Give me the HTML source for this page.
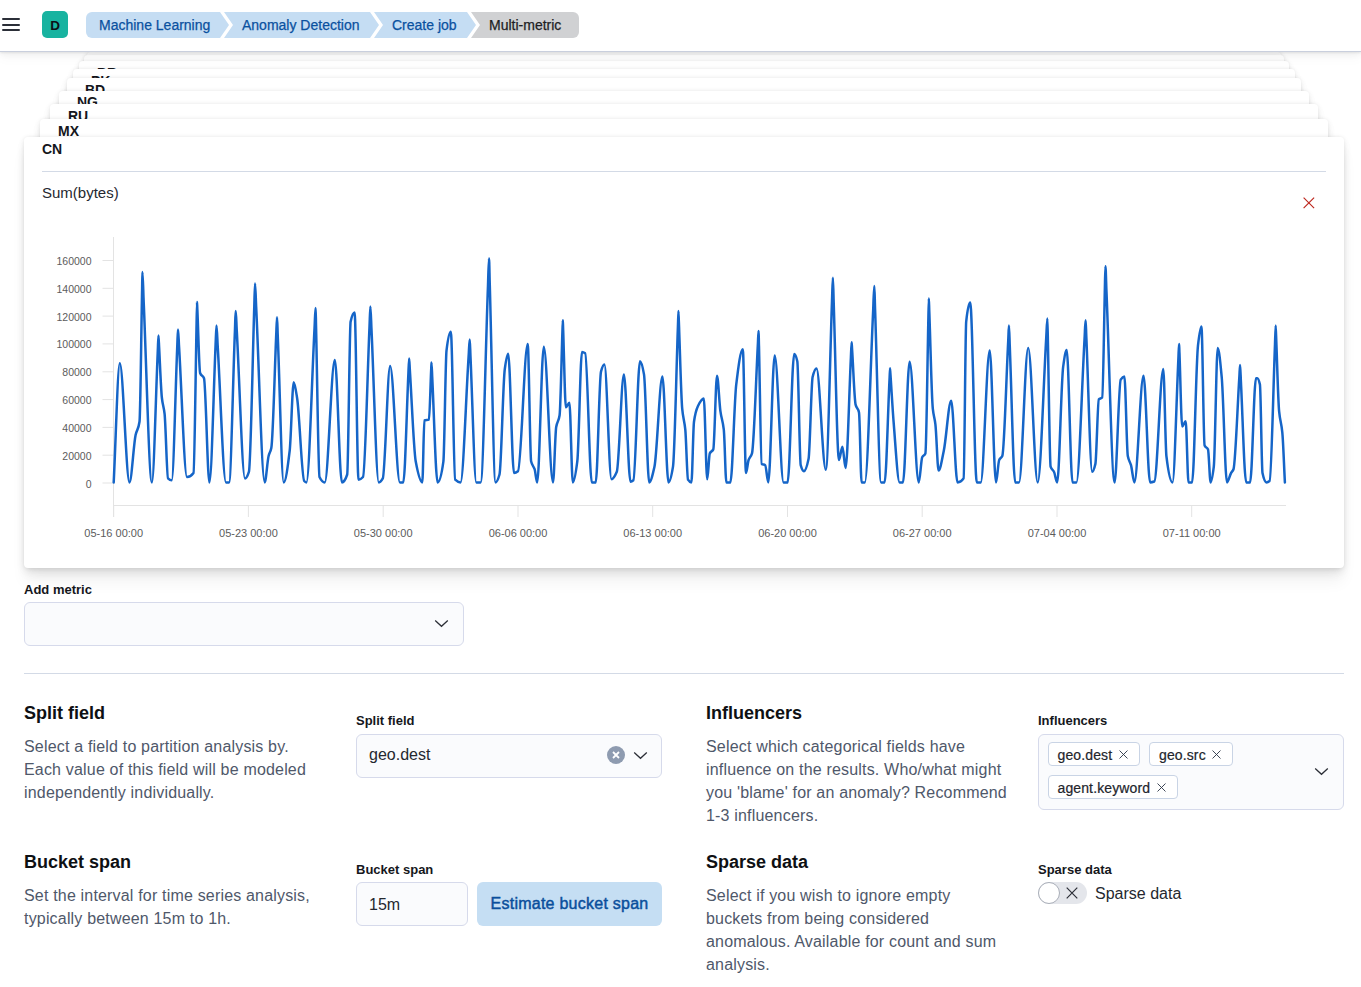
<!DOCTYPE html>
<html><head><meta charset="utf-8">
<style>
*{box-sizing:border-box;margin:0;padding:0}
html,body{width:1361px;height:987px;overflow:hidden;background:#fff;font-family:"Liberation Sans",sans-serif;color:#1d2a3e}
.abs{position:absolute}
#hdr{position:absolute;left:0;top:0;width:1361px;height:52px;background:#fff;border-bottom:1px solid #c9cfdd;box-shadow:0 1px 2px rgba(0,0,0,0.08),0 3px 6px rgba(0,0,0,0.04),0 6px 12px rgba(0,0,0,0.03);z-index:50}
.hb{position:absolute;left:2px;width:18px;height:2px;background:#2b2f38;border-radius:1px}
#av{position:absolute;left:42px;top:11px;width:26px;height:27px;border-radius:5px;background:#18b3a0;color:#0b0f16;font-size:13.5px;font-weight:700;text-align:center;line-height:29px}
.crumb{position:absolute;top:12px;height:26px;background:#c5ddf3;color:#0a519f;font-size:14px;line-height:26px;white-space:nowrap;-webkit-text-stroke:0.25px currentColor}
.card{position:absolute;background:#fff;border-radius:4px;box-shadow:0 0.9px 4px -1px rgba(0,0,0,.10),0 2.6px 8px -1px rgba(0,0,0,.08),0 5.7px 12px -1px rgba(0,0,0,.06),0 15px 15px -1px rgba(0,0,0,.05)}
.clabel{position:absolute;font-size:14px;font-weight:700;color:#15171c;white-space:nowrap}
.ttl{position:absolute;font-size:18px;font-weight:700;color:#0e1013;white-space:nowrap;margin-top:1px}
.desc{position:absolute;font-size:16px;line-height:23px;color:#4f586a;letter-spacing:0.18px}
.flabel{position:absolute;font-size:13px;font-weight:700;color:#15171c;white-space:nowrap;margin-top:1px}
.ctl{position:absolute;background:#fafbfd;border:1px solid #d6daeb;border-radius:6px}
.pill{position:absolute;height:24px;background:#fff;border:1px solid #c9d4e5;border-radius:4px;font-size:14px;line-height:22px;color:#22252c;padding-left:9px;white-space:nowrap;letter-spacing:0.12px;-webkit-text-stroke:0.2px currentColor}
</style></head><body>
<div id="hdr">
  <div class="hb" style="top:18.1px;height:2.2px"></div>
  <div class="hb" style="top:23.6px;height:2.2px"></div>
  <div class="hb" style="top:28.8px;height:2.2px"></div>
  <div id="av">D</div>
  <div class="crumb" style="left:86px;width:143px;padding-left:13px;clip-path:polygon(0 0, 134px 0, 143px 50%, 134px 100%, 0 100%);border-radius:6px 0 0 6px;">Machine Learning</div>
<div class="crumb" style="left:224px;width:155px;padding-left:18px;clip-path:polygon(0 0, 146px 0, 155px 50%, 146px 100%, 0 100%, 9px 50%);">Anomaly Detection</div>
<div class="crumb" style="left:374px;width:102px;padding-left:18px;clip-path:polygon(0 0, 93px 0, 102px 50%, 93px 100%, 0 100%, 9px 50%);">Create job</div>
<div class="crumb" style="left:471px;width:108px;padding-left:18px;clip-path:polygon(0 0, 100% 0, 100% 100%, 0 100%, 9px 50%);border-radius:0 6px 6px 0;background:#d0d1d3;color:#1d1e24;">Multi-metric</div>

</div>
<div class="card" style="left:40px;top:119px;width:1288px;height:300px;z-index:19"><div class="clabel" style="left:18px;top:4px">MX</div></div>
<div class="card" style="left:50px;top:104.3px;width:1268px;height:300px;z-index:18"><div class="clabel" style="left:18px;top:3.5px">RU</div></div>
<div class="card" style="left:59px;top:90.6px;width:1250px;height:300px;z-index:17"><div class="clabel" style="left:18px;top:3.2px">NG</div></div>
<div class="card" style="left:67px;top:78.4px;width:1234px;height:300px;z-index:16"><div class="clabel" style="left:18px;top:4px">BD</div></div>
<div class="card" style="left:73px;top:69.3px;width:1222px;height:300px;z-index:15"><div class="clabel" style="left:18px;top:4px">PK</div></div>
<div class="card" style="left:79px;top:60.8px;width:1210px;height:300px;z-index:14"><div class="clabel" style="left:18px;top:4px">BR</div></div>
<div class="card" style="left:83.6px;top:55.3px;width:1200.9px;height:300px;z-index:13"><div class="clabel" style="left:18px;top:4px">IN</div></div>
<div class="card" style="left:87px;top:52px;width:1194px;height:300px;z-index:12"><div class="clabel" style="left:18px;top:4px">US</div></div>

<div class="card" style="left:24px;top:137px;width:1320px;height:431px;z-index:20">
  <div class="clabel" style="left:18px;top:4px">CN</div>
  <div class="abs" style="left:18px;top:34px;width:1284px;height:1px;background:#d3dae6"></div>
  <div class="abs" style="left:18px;top:47px;font-size:15px;color:#25282f">Sum(bytes)</div>
  <svg class="abs" style="left:1279px;top:60px" width="12" height="12" viewBox="0 0 12 12"><path d="M0.6,0.6 L11.1,11.1 M11.1,0.6 L0.6,11.1" stroke="#bd271e" stroke-width="1.15"/></svg>
</div>
<svg class="abs" style="left:0;top:0;z-index:30" width="1361" height="987" viewBox="0 0 1361 987">
  <g stroke="#e3e3e3" stroke-width="1" fill="none">
    <path d="M113.5,237 V517"/>
    <path d="M113.5,505.5 H1286"/>
    <path d="M102.5,483.0 H113.5"/><path d="M102.5,455.2 H113.5"/><path d="M102.5,427.4 H113.5"/><path d="M102.5,399.6 H113.5"/><path d="M102.5,371.8 H113.5"/><path d="M102.5,343.9 H113.5"/><path d="M102.5,316.1 H113.5"/><path d="M102.5,288.3 H113.5"/><path d="M102.5,260.5 H113.5"/><path d="M113.7,505.5 V517"/><path d="M248.4,505.5 V517"/><path d="M383.2,505.5 V517"/><path d="M518.0,505.5 V517"/><path d="M652.7,505.5 V517"/><path d="M787.5,505.5 V517"/><path d="M922.2,505.5 V517"/><path d="M1057.0,505.5 V517"/><path d="M1191.7,505.5 V517"/>
  </g>
  <g font-family="Liberation Sans" font-size="10.5" fill="#5c5c5c" text-anchor="end"><text x="91.5" y="487.5">0</text><text x="91.5" y="459.7">20000</text><text x="91.5" y="431.9">40000</text><text x="91.5" y="404.1">60000</text><text x="91.5" y="376.3">80000</text><text x="91.5" y="348.4">100000</text><text x="91.5" y="320.6">120000</text><text x="91.5" y="292.8">140000</text><text x="91.5" y="265.0">160000</text></g>
  <g font-family="Liberation Sans" font-size="11" fill="#5c5c5c" text-anchor="middle"><text x="113.7" y="537">05-16 00:00</text><text x="248.4" y="537">05-23 00:00</text><text x="383.2" y="537">05-30 00:00</text><text x="518.0" y="537">06-06 00:00</text><text x="652.7" y="537">06-13 00:00</text><text x="787.5" y="537">06-20 00:00</text><text x="922.2" y="537">06-27 00:00</text><text x="1057.0" y="537">07-04 00:00</text><text x="1191.7" y="537">07-11 00:00</text></g>
  <path d="M113.7,482.4C115.7,442.7 117.8,363.3 119.8,363.3C123.0,363.3 126.3,482.4 129.5,482.4C131.5,482.4 133.6,444.3 135.6,435.0C136.9,429.0 138.2,430.6 139.5,421.8C140.4,416.0 141.2,333.9 142.1,290.0C142.2,284.0 142.3,272.0 142.4,272.0C142.8,272.0 143.2,288.8 143.5,297.2C146.3,359.0 149.1,482.4 151.9,482.4C153.8,482.4 155.8,396.2 157.7,353.0C158.0,347.2 158.2,335.4 158.5,335.4C158.6,335.4 158.8,340.4 158.9,342.9C159.9,361.3 160.9,389.2 161.9,398.0C162.8,406.0 163.7,406.0 164.6,413.9C165.7,423.9 166.9,477.3 168.0,478.4C169.2,479.6 170.5,480.3 171.7,480.3C173.5,480.3 175.4,391.9 177.2,347.7C177.5,341.7 177.7,329.6 178.0,329.6C178.4,329.6 178.7,341.4 179.1,347.3C181.7,390.5 184.4,477.0 187.0,477.0C189.2,477.0 191.3,476.0 193.5,473.0C194.5,471.6 195.6,372.7 196.6,322.5C196.7,315.7 196.9,302.0 197.0,302.0C197.1,302.0 197.2,307.7 197.4,310.5C198.3,331.3 199.2,370.5 200.1,373.0C201.4,376.5 202.7,375.1 204.0,378.3C205.8,382.7 207.6,482.4 209.4,482.4C211.5,482.4 213.6,390.4 215.6,344.4C215.9,338.1 216.2,325.6 216.5,325.6C216.9,325.6 217.3,338.1 217.6,344.4C220.4,390.4 223.2,482.4 226.0,482.4C227.0,482.4 228.0,482.4 229.0,482.4C231.0,482.4 232.9,381.8 234.9,331.6C235.2,324.7 235.4,311.0 235.7,311.0C236.1,311.0 236.4,324.4 236.8,331.1C239.5,380.2 242.3,478.4 245.0,478.4C246.3,478.4 247.6,475.8 248.9,471.8C250.7,466.3 252.5,361.3 254.3,306.1C254.5,298.6 254.8,283.5 255.0,283.5C255.4,283.5 255.8,299.4 256.2,307.4C259.0,365.7 261.9,482.4 264.7,482.4C266.0,482.4 267.3,461.2 268.6,456.0C269.5,452.4 270.4,452.4 271.3,448.0C273.0,439.9 274.6,371.3 276.3,332.9C276.5,327.7 276.8,317.2 277.0,317.2C277.3,317.2 277.5,330.4 277.8,337.0C279.8,385.5 281.7,482.4 283.7,482.4C285.7,482.4 287.7,467.4 289.7,450.7C291.0,439.5 292.4,382.3 293.7,382.3C294.8,382.3 296.0,390.9 297.1,398.0C299.5,412.9 301.8,478.5 304.2,481.0C304.9,481.8 305.7,482.4 306.4,482.4C309.1,482.4 311.8,380.1 314.5,328.9C314.9,322.0 315.2,308.0 315.6,308.0C315.8,308.0 315.9,321.5 316.1,328.3C317.2,377.9 318.4,474.6 319.5,477.0C321.3,480.8 323.0,482.4 324.8,482.4C328.1,482.4 331.5,359.9 334.8,359.9C337.2,359.9 339.5,482.4 341.9,482.4C343.7,482.4 345.4,480.0 347.2,474.5C348.3,471.0 349.5,326.8 350.6,321.7C351.9,315.7 353.3,312.4 354.6,312.4C355.9,312.4 357.2,479.7 358.5,479.7C360.0,479.7 361.5,478.7 363.0,477.0C365.2,474.6 367.3,376.9 369.5,326.9C369.8,320.0 370.1,306.4 370.4,306.4C370.7,306.4 371.1,320.5 371.4,327.5C373.9,379.1 376.3,482.4 378.8,482.4C380.1,482.4 381.5,480.7 382.8,478.4C385.2,474.2 387.7,366.0 390.1,366.0C393.4,366.0 396.6,482.4 399.9,482.4C401.0,482.4 402.2,482.4 403.3,482.4C405.0,482.4 406.7,409.7 408.4,373.4C408.6,368.4 408.9,358.5 409.1,358.5C409.4,358.5 409.6,366.7 409.9,370.8C411.8,401.0 413.8,450.9 415.7,461.3C417.9,473.1 420.1,482.4 422.3,482.4C423.0,482.4 423.7,420.8 424.4,420.5C425.9,419.9 427.4,420.3 428.9,419.7C429.7,419.4 430.4,386.1 431.2,369.4C431.3,367.1 431.4,362.5 431.5,362.5C431.7,362.5 432.0,372.1 432.2,376.9C434.0,412.1 435.8,482.4 437.6,482.4C439.5,482.4 441.5,475.2 443.4,461.3C444.4,453.9 445.5,359.0 446.5,350.6C447.9,338.9 449.4,331.7 450.8,331.7C452.3,331.7 453.7,478.2 455.2,479.7C457.0,481.5 458.7,482.4 460.5,482.4C463.2,482.4 465.9,398.6 468.6,356.7C469.0,351.0 469.3,339.6 469.7,339.6C470.0,339.6 470.2,351.0 470.5,356.7C472.4,398.6 474.4,482.4 476.3,482.4C477.7,482.4 479.2,482.4 480.6,482.4C483.1,482.4 485.5,351.0 488.0,285.3C488.3,276.3 488.7,258.4 489.0,258.4C489.3,258.4 489.5,276.3 489.8,285.3C491.7,351.0 493.7,482.4 495.6,482.4C496.9,482.4 498.2,479.1 499.5,474.5C501.3,468.3 503.0,381.3 504.8,369.0C505.9,361.1 507.1,353.8 508.2,353.8C510.1,353.8 512.1,473.0 514.0,473.0C515.3,473.0 516.7,472.3 518.0,471.3C521.2,468.9 524.5,344.0 527.7,344.0C528.8,344.0 530.0,456.5 531.1,461.3C532.3,466.3 533.4,465.5 534.6,469.2C535.5,472.0 536.3,482.4 537.2,482.4C539.4,482.4 541.6,346.7 543.8,346.7C546.9,346.7 549.9,482.4 553.0,482.4C554.1,482.4 555.1,433.2 556.2,427.0C557.3,420.4 558.5,422.4 559.6,415.2C560.5,409.2 561.5,359.5 562.4,331.7C562.5,327.9 562.7,320.3 562.8,320.3C562.9,320.3 563.0,327.3 563.2,330.7C564.1,356.3 565.0,407.3 565.9,407.3C567.1,407.3 568.2,402.8 569.4,402.8C570.5,402.8 571.7,482.4 572.8,482.4C574.3,482.4 575.8,473.0 577.3,461.3C578.9,449.1 580.4,352.0 582.0,352.0C583.1,352.0 584.1,352.5 585.2,353.3C587.4,354.9 589.6,482.4 591.8,482.4C593.1,482.4 594.4,482.4 595.7,482.4C597.5,482.4 599.2,378.0 601.0,371.7C602.1,367.6 603.3,364.6 604.4,364.6C606.8,364.6 609.1,479.2 611.5,479.2C613.3,479.2 615.0,476.1 616.8,471.8C619.2,466.0 621.5,374.4 623.9,374.4C626.1,374.4 628.3,481.8 630.5,481.8C631.5,481.8 632.4,481.2 633.4,480.3C635.6,478.3 637.8,361.2 640.0,361.2C641.3,361.2 642.7,367.0 644.0,374.4C645.7,384.0 647.5,482.4 649.2,482.4C651.0,482.4 652.7,474.6 654.5,466.6C657.1,454.6 659.8,376.5 662.4,376.5C664.4,376.5 666.5,482.4 668.5,482.4C670.0,482.4 671.5,475.9 673.0,466.6C674.6,456.6 676.2,375.4 677.8,329.8C678.1,323.5 678.3,311.1 678.5,311.1C678.6,311.1 678.8,318.9 678.9,322.8C680.0,351.4 681.1,396.9 682.2,408.6C683.2,419.7 684.3,419.3 685.3,429.7C686.2,438.8 687.1,478.3 688.0,479.7C689.1,481.5 690.3,482.4 691.4,482.4C692.3,482.4 693.1,428.0 694.0,421.8C695.3,412.3 696.7,408.7 698.0,406.0C699.9,402.2 701.9,398.6 703.8,398.6C704.9,398.6 706.1,479.2 707.2,479.2C708.1,479.2 708.9,455.2 709.8,453.4C711.0,450.9 712.1,451.9 713.3,449.4C714.5,446.8 715.8,375.7 717.0,375.7C718.1,375.7 719.3,403.1 720.4,411.2C721.5,419.3 722.7,419.7 723.8,429.7C724.7,437.3 725.5,482.4 726.4,482.4C727.7,482.4 729.1,482.4 730.4,482.4C732.3,482.4 734.3,400.9 736.2,384.9C738.4,366.7 740.6,349.3 742.8,349.3C743.9,349.3 744.9,473.1 746.0,473.1C746.9,473.1 747.7,462.5 748.6,460.0C749.7,456.8 750.9,457.1 752.0,453.4C753.9,447.0 755.9,381.5 757.8,345.6C758.1,340.7 758.3,330.9 758.6,330.9C758.7,330.9 758.8,341.5 759.0,346.9C759.9,385.9 760.8,463.2 761.7,463.9C762.9,464.8 764.0,464.4 765.2,465.2C766.2,465.9 767.3,482.4 768.3,482.4C770.4,482.4 772.6,355.4 774.7,355.4C777.7,355.4 780.6,482.4 783.6,482.4C784.9,482.4 786.3,482.4 787.6,482.4C789.8,482.4 792.0,354.1 794.2,354.1C795.2,354.1 796.3,356.9 797.3,361.2C798.4,366.0 799.6,461.2 800.7,465.2C801.8,469.0 802.8,471.3 803.9,471.3C805.5,471.3 807.0,466.3 808.6,458.7C809.9,452.2 811.3,382.2 812.6,377.0C813.9,372.0 815.2,368.6 816.5,368.6C819.6,368.6 822.7,469.7 825.8,469.7C827.9,469.7 830.0,357.1 832.0,300.7C832.3,293.1 832.6,277.7 832.9,277.7C833.1,277.7 833.4,292.3 833.6,299.6C835.4,353.1 837.2,460.0 839.0,460.0C840.1,460.0 841.3,446.8 842.4,446.8C843.5,446.8 844.5,467.9 845.6,467.9C847.4,467.9 849.1,394.2 850.9,357.3C851.1,352.3 851.4,342.2 851.6,342.2C851.8,342.2 851.9,347.2 852.1,349.7C853.3,368.0 854.4,399.9 855.6,404.6C856.7,409.2 857.9,407.5 859.0,412.5C859.9,416.4 860.7,482.4 861.6,482.4C862.7,482.4 863.7,482.4 864.8,482.4C867.6,482.4 870.4,367.2 873.2,309.7C873.5,301.8 873.9,286.1 874.3,286.1C874.6,286.1 874.8,301.8 875.1,309.7C877.1,367.2 879.1,482.4 881.1,482.4C882.3,482.4 883.4,482.4 884.6,482.4C886.2,482.4 887.8,415.5 889.4,382.0C889.7,377.4 889.9,368.3 890.1,368.3C890.2,368.3 890.4,372.8 890.5,375.0C891.6,391.5 892.7,411.1 893.8,424.4C895.7,448.2 897.7,482.4 899.6,482.4C900.7,482.4 901.9,482.4 903.0,482.4C905.2,482.4 907.4,361.7 909.6,361.7C912.7,361.7 915.7,482.4 918.8,482.4C919.9,482.4 921.1,459.7 922.2,457.3C923.3,455.1 924.3,456.0 925.4,453.4C926.4,451.0 927.4,362.5 928.4,317.1C928.5,310.9 928.7,298.5 928.8,298.5C929.0,298.5 929.1,307.3 929.3,311.7C930.5,344.0 931.6,397.3 932.8,408.6C933.7,417.0 934.5,417.1 935.4,424.4C936.5,433.4 937.5,470.5 938.6,470.5C940.3,470.5 942.1,459.0 943.8,450.7C946.3,438.9 948.7,400.7 951.2,400.7C953.3,400.7 955.4,482.4 957.5,482.4C959.5,482.4 961.6,481.4 963.6,478.4C964.5,477.1 965.3,329.9 966.2,321.7C967.5,309.0 968.9,302.4 970.2,302.4C972.4,302.4 974.6,482.4 976.8,482.4C978.1,482.4 979.4,482.4 980.7,482.4C983.7,482.4 986.7,350.6 989.7,350.6C991.8,350.6 993.9,482.4 996.0,482.4C997.1,482.4 998.1,462.3 999.2,460.0C1000.2,457.8 1001.3,458.3 1002.3,456.0C1004.3,451.6 1006.2,379.5 1008.2,341.2C1008.5,336.0 1008.7,325.6 1009.0,325.6C1009.2,325.6 1009.5,338.1 1009.7,344.4C1011.6,390.4 1013.4,482.4 1015.2,482.4C1016.5,482.4 1017.7,482.4 1019.0,482.4C1022.1,482.4 1025.1,348.0 1028.2,348.0C1031.4,348.0 1034.5,482.4 1037.7,482.4C1040.5,482.4 1043.4,386.2 1046.2,338.2C1046.6,331.6 1047.0,318.5 1047.4,318.5C1047.5,318.5 1047.7,330.3 1047.8,336.3C1048.7,379.7 1049.7,463.7 1050.6,466.6C1051.7,470.1 1052.9,469.4 1054.0,471.8C1055.1,474.0 1056.1,482.4 1057.2,482.4C1059.2,482.4 1061.2,380.6 1063.2,366.4C1064.4,358.1 1065.5,350.1 1066.7,350.1C1068.6,350.1 1070.6,482.4 1072.5,482.4C1073.8,482.4 1075.1,482.4 1076.4,482.4C1079.1,482.4 1081.8,387.3 1084.5,339.8C1084.9,333.3 1085.2,320.3 1085.6,320.3C1085.9,320.3 1086.1,332.4 1086.4,338.5C1088.3,382.9 1090.3,471.8 1092.2,471.8C1093.3,471.8 1094.3,468.5 1095.4,463.9C1096.5,459.0 1097.7,400.6 1098.8,399.4C1099.9,398.2 1101.1,398.8 1102.2,397.5C1103.1,396.4 1104.1,320.5 1105.0,282.0C1105.1,276.8 1105.3,266.3 1105.4,266.3C1105.8,266.3 1106.1,283.6 1106.5,292.2C1109.2,355.6 1111.9,482.4 1114.6,482.4C1116.6,482.4 1118.7,382.6 1120.7,379.6C1121.9,377.8 1123.2,376.5 1124.4,376.5C1125.5,376.5 1126.7,450.2 1127.8,456.0C1128.9,461.4 1129.9,461.3 1131.0,465.2C1132.1,469.3 1133.3,482.4 1134.4,482.4C1137.4,482.4 1140.5,375.7 1143.5,375.7C1145.7,375.7 1147.9,482.4 1150.1,482.4C1151.5,482.4 1152.9,482.0 1154.3,481.5C1157.3,480.4 1160.3,369.1 1163.3,369.1C1164.3,369.1 1165.4,447.6 1166.4,456.0C1168.4,472.6 1170.5,482.4 1172.5,482.4C1174.4,482.4 1176.4,401.2 1178.3,360.6C1178.6,355.1 1178.8,344.0 1179.1,344.0C1179.2,344.0 1179.3,350.6 1179.5,353.9C1180.4,378.1 1181.3,426.5 1182.2,426.5C1183.4,426.5 1184.5,421.2 1185.7,421.2C1186.6,421.2 1187.6,482.4 1188.5,482.4C1189.7,482.4 1190.9,482.4 1192.1,482.4C1194.1,482.4 1196.0,362.2 1198.0,345.4C1199.1,335.7 1200.3,326.4 1201.4,326.4C1202.5,326.4 1203.5,443.1 1204.6,445.5C1205.7,448.0 1206.9,446.9 1208.0,449.4C1208.9,451.3 1209.7,482.4 1210.6,482.4C1211.7,482.4 1212.7,475.5 1213.8,466.6C1215.1,455.8 1216.4,348.0 1217.7,348.0C1219.0,348.0 1220.4,363.1 1221.7,377.0C1223.5,395.4 1225.2,482.4 1227.0,482.4C1228.3,482.4 1229.7,475.6 1231.0,473.1C1231.8,471.6 1232.7,471.3 1233.5,469.2C1235.4,464.2 1237.4,408.1 1239.3,377.6C1239.6,373.4 1239.8,365.1 1240.1,365.1C1240.3,365.1 1240.6,374.5 1240.8,379.2C1242.6,413.6 1244.4,482.4 1246.2,482.4C1247.5,482.4 1248.8,482.4 1250.1,482.4C1252.1,482.4 1254.0,378.3 1256.0,378.3C1256.4,378.3 1256.9,378.3 1257.3,378.3C1258.2,378.3 1259.0,380.6 1259.9,384.4C1260.8,388.2 1261.6,469.1 1262.5,473.1C1263.8,479.3 1265.2,482.4 1266.5,482.4C1267.5,482.4 1268.6,481.8 1269.6,481.0C1271.4,479.5 1273.2,389.8 1275.0,344.2C1275.2,338.0 1275.5,325.6 1275.7,325.6C1275.8,325.6 1276.0,332.4 1276.1,335.9C1277.1,361.0 1278.1,400.7 1279.1,411.2C1280.2,422.4 1281.2,421.6 1282.3,432.3C1283.2,441.0 1284.0,465.7 1284.9,482.4" fill="none" stroke="#1565c8" stroke-width="2.5" stroke-linejoin="round" stroke-linecap="round"/>
</svg>

<div class="flabel" style="left:24px;top:581px">Add metric</div>
<div class="ctl" style="left:24px;top:602px;width:440px;height:44px"></div>
<svg class="abs" style="left:434px;top:619px" width="15" height="9" viewBox="0 0 15 9"><path d="M1.2,1.5 L7.5,7.3 L13.8,1.5" fill="none" stroke="#2b2e36" stroke-width="1.25"/></svg>

<div class="abs" style="left:24px;top:673px;width:1320px;height:1px;background:#d3dae6"></div>

<div class="ttl" style="left:24px;top:702px">Split field</div>
<div class="desc" style="left:24px;top:735px;width:320px">Select a field to partition analysis by.<br>Each value of this field will be modeled<br>independently individually.</div>
<div class="flabel" style="left:356px;top:712px">Split field</div>
<div class="ctl" style="left:356px;top:734px;width:306px;height:44px"></div>
<div class="abs" style="left:369px;top:746px;font-size:16px;color:#25282f">geo.dest</div>
<div class="abs" style="left:607px;top:746px;width:18px;height:18px;border-radius:50%;background:#8e9bb0"></div>
<svg class="abs" style="left:607px;top:746px" width="18" height="18" viewBox="0 0 18 18"><path d="M6,6 L12,12 M12,6 L6,12" stroke="#fff" stroke-width="1.8"/></svg>
<svg class="abs" style="left:633px;top:751px" width="15" height="9" viewBox="0 0 15 9"><path d="M1.2,1.5 L7.5,7.3 L13.8,1.5" fill="none" stroke="#2b2e36" stroke-width="1.25"/></svg>

<div class="ttl" style="left:24px;top:851px">Bucket span</div>
<div class="desc" style="left:24px;top:884px;width:320px">Set the interval for time series analysis,<br>typically between 15m to 1h.</div>
<div class="flabel" style="left:356px;top:861px">Bucket span</div>
<div class="ctl" style="left:356px;top:882px;width:112px;height:44px"></div>
<div class="abs" style="left:369px;top:895.5px;font-size:16px;color:#25282f">15m</div>
<div class="abs" style="left:477px;top:882px;width:185px;height:44px;border-radius:6px;background:#c5def3;color:#0a4f9c;font-size:16px;font-weight:400;letter-spacing:0.25px;-webkit-text-stroke:0.45px currentColor;line-height:44px;text-align:center">Estimate bucket span</div>

<div class="ttl" style="left:706px;top:702px">Influencers</div>
<div class="desc" style="left:706px;top:735px;width:320px">Select which categorical fields have<br>influence on the results. Who/what might<br>you 'blame' for an anomaly? Recommend<br>1-3 influencers.</div>
<div class="flabel" style="left:1038px;top:712px">Influencers</div>
<div class="ctl" style="left:1038px;top:734px;width:306px;height:76px"></div>
<div class="pill" style="left:1047.5px;top:742px;width:92px;line-height:24.5px">geo.dest<svg style="position:absolute;right:11px;top:7px" width="9" height="9" viewBox="0 0 9 9"><path d="M0.5,0.5 L8.5,8.5 M8.5,0.5 L0.5,8.5" stroke="#2a3445" stroke-width="0.9"/></svg></div>
<div class="pill" style="left:1149px;top:742px;width:83.5px;line-height:24.5px">geo.src<svg style="position:absolute;right:11px;top:7px" width="9" height="9" viewBox="0 0 9 9"><path d="M0.5,0.5 L8.5,8.5 M8.5,0.5 L0.5,8.5" stroke="#2a3445" stroke-width="0.9"/></svg></div>
<div class="pill" style="left:1047.5px;top:775px;width:130px;line-height:24px">agent.keyword<svg style="position:absolute;right:11px;top:7px" width="9" height="9" viewBox="0 0 9 9"><path d="M0.5,0.5 L8.5,8.5 M8.5,0.5 L0.5,8.5" stroke="#2a3445" stroke-width="0.9"/></svg></div>

<svg class="abs" style="left:1314px;top:767px" width="15" height="9" viewBox="0 0 15 9"><path d="M1.2,1.5 L7.5,7.3 L13.8,1.5" fill="none" stroke="#2b2e36" stroke-width="1.25"/></svg>

<div class="ttl" style="left:706px;top:851px">Sparse data</div>
<div class="desc" style="left:706px;top:884px;width:320px">Select if you wish to ignore empty<br>buckets from being considered<br>anomalous. Available for count and sum<br>analysis.</div>
<div class="flabel" style="left:1038px;top:861px">Sparse data</div>
<div class="abs" style="left:1038px;top:882px;width:49px;height:22px;border-radius:11px;background:#e4e6eb"></div>
<div class="abs" style="left:1038px;top:882px;width:22px;height:22px;border-radius:50%;background:#fff;border:1px solid #a9aeb8"></div>
<svg class="abs" style="left:1066px;top:887px" width="12" height="12" viewBox="0 0 12 12"><path d="M0.7,0.7 L11.3,11.3 M11.3,0.7 L0.7,11.3" stroke="#2b2e36" stroke-width="1.2"/></svg>
<div class="abs" style="left:1095px;top:884.5px;font-size:16px;color:#25282f">Sparse data</div>
</body></html>
